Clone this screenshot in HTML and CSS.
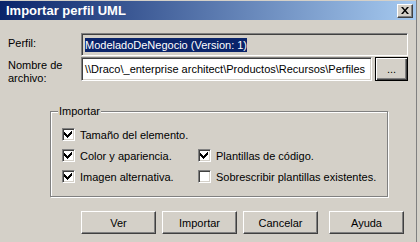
FILE: index.html
```html
<!DOCTYPE html>
<html lang="es">
<head>
    <meta charset="UTF-8">
    <link rel="stylesheet" href="styles.css">
    <title>Importar perfil UML</title>
</head>
<body>
    <div class="dialog">
        <div class="titlebar">
            <span class="title">Importar perfil UML</span>
            <span class="close-btn">
                <svg width="8" height="7" viewBox="0 0 8 7"><path d="M0 0h2l2 2.5 2-2.5h2l-3 3.5 3 3.5h-2l-2-2.5-2 2.5h-2l3-3.5z" fill="#000"/></svg>
            </span>
        </div>
        <div class="content">
            <div class="row row-profile">
                <label class="label">Perfil:</label>
                <div class="field field-disabled"><span class="selected">ModeladoDeNegocio (Version: 1)</span></div>
            </div>
            <div class="row row-file">
                <label class="label">Nombre de<br>archivo:</label>
                <div class="field field-file">\\Draco\_enterprise architect\Productos\Recursos\Perfiles</div>
                <button class="btn btn-dots">...</button>
            </div>
            <div class="group">
                <span class="group-title">Importar</span>
                <div class="check-grid">
                    <div class="check"><span class="box on"></span>Tamaño del elemento.</div>
                    <div></div>
                    <div class="check"><span class="box on"></span>Color y apariencia.</div>
                    <div class="check"><span class="box on"></span>Plantillas de código.</div>
                    <div class="check"><span class="box on"></span>Imagen alternativa.</div>
                    <div class="check"><span class="box"></span>Sobrescribir plantillas existentes.</div>
                </div>
            </div>
            <div class="buttons">
                <button class="btn">Ver</button>
                <button class="btn">Importar</button>
                <button class="btn">Cancelar</button>
                <button class="btn btn-help">Ayuda</button>
            </div>
        </div>
    </div>
</body>
</html>
```
FILE: styles.css
```css
body {
    margin: 0;
    background-color: #d4d0c8;
    font-family: "Liberation Sans", Arial, sans-serif;
    font-size: 11px;
    color: #000;
}

.dialog {
    width: 417px;
    height: 242px;
    padding-top: 1px;
    box-sizing: border-box;
    border-right: 1px solid #808080;
    background-color: #d4d0c8;
    overflow: hidden;
}

.titlebar {
    height: 19px;
    display: flex;
    align-items: center;
    justify-content: space-between;
    background: linear-gradient(to right, #0a246a, #a6caf0);
    padding: 0 3px 0 6px;
}

.title {
    color: #fff;
    font-weight: bold;
    font-size: 13px;
}

.close-btn {
    width: 16px;
    height: 14px;
    box-sizing: border-box;
    display: flex;
    align-items: center;
    justify-content: center;
    background-color: #d4d0c8;
    border: 1px solid;
    border-color: #fff #404040 #404040 #fff;
    box-shadow: inset -1px -1px 0 #808080;
}

.content {
    padding: 13px 0 0 8px;
}

.row {
    display: flex;
}

.label {
    width: 73px;
    line-height: 13px;
}

.row-profile .label {
    padding-top: 4px;
}

.row-file {
    margin-top: 1px;
}

.row-file .label {
    padding-top: 2px;
}

.field {
    height: 23px;
    box-sizing: border-box;
    border: 1px solid;
    border-color: #808080 #fff #fff #808080;
    box-shadow: inset 1px 1px 0 #404040, inset -1px -1px 0 #d4d0c8;
    padding: 0 0 0 3px;
    display: flex;
    align-items: center;
    white-space: nowrap;
    overflow: hidden;
}

.field-disabled {
    width: 327px;
    background-color: #d4d0c8;
}

.selected {
    background-color: #0a246a;
    color: #fff;
    line-height: 14px;
}

.field-file {
    width: 291px;
    height: 24px;
    background-color: #fff;
}

.btn {
    width: 75px;
    height: 23px;
    padding: 0;
    font-family: inherit;
    font-size: 11px;
    color: #000;
    background-color: #d4d0c8;
    border: 1px solid;
    border-color: #fff #404040 #404040 #fff;
    box-shadow: inset -1px -1px 0 #808080;
}

.btn-dots {
    width: 33px;
    height: 24px;
    margin-left: 3px;
    border: 1px solid #000;
    box-shadow: inset 1px 1px 0 #fff, inset -1px -1px 0 #404040, inset -2px -2px 0 #808080;
}

.group {
    position: relative;
    width: 336px;
    height: 84px;
    margin: 26px 0 0 42px;
    border: 1px solid #808080;
    box-shadow: inset 1px 1px 0 #fff, 1px 1px 0 #fff;
}

.group-title {
    position: absolute;
    top: -7px;
    left: 7px;
    padding: 0 1px;
    line-height: 13px;
    background-color: #d4d0c8;
}

.check-grid {
    display: grid;
    grid-template-columns: 136px auto;
    row-gap: 8px;
    padding: 16px 0 0 11px;
}

.check {
    display: flex;
    align-items: center;
    gap: 5px;
    height: 13px;
    white-space: nowrap;
}

.box {
    width: 13px;
    height: 13px;
    box-sizing: border-box;
    border: 1px solid;
    border-color: #808080 #fff #fff #808080;
    box-shadow: inset 1px 1px 0 #404040, inset -1px -1px 0 #d4d0c8;
    background-color: #fff;
}

.box.on {
    background-image: url("data:image/svg+xml,%3Csvg xmlns='http://www.w3.org/2000/svg' width='11' height='11' viewBox='0 0 11 11' shape-rendering='crispEdges'%3E%3Cpath d='M8 2h1v3h-1v1h-1v1h-1v1h-1v1h-1v-1h-1v-1h-1v-1h-1v-3h1v1h1v1h1v1h1v-1h1v-1h1v-1h1z' fill='%23000'/%3E%3C/svg%3E");
    background-position: 0 0;
    background-repeat: no-repeat;
}

.buttons {
    display: flex;
    gap: 6px;
    margin: 14px 0 0 73px;
}

.btn-help {
    margin-left: 5px;
}
```
